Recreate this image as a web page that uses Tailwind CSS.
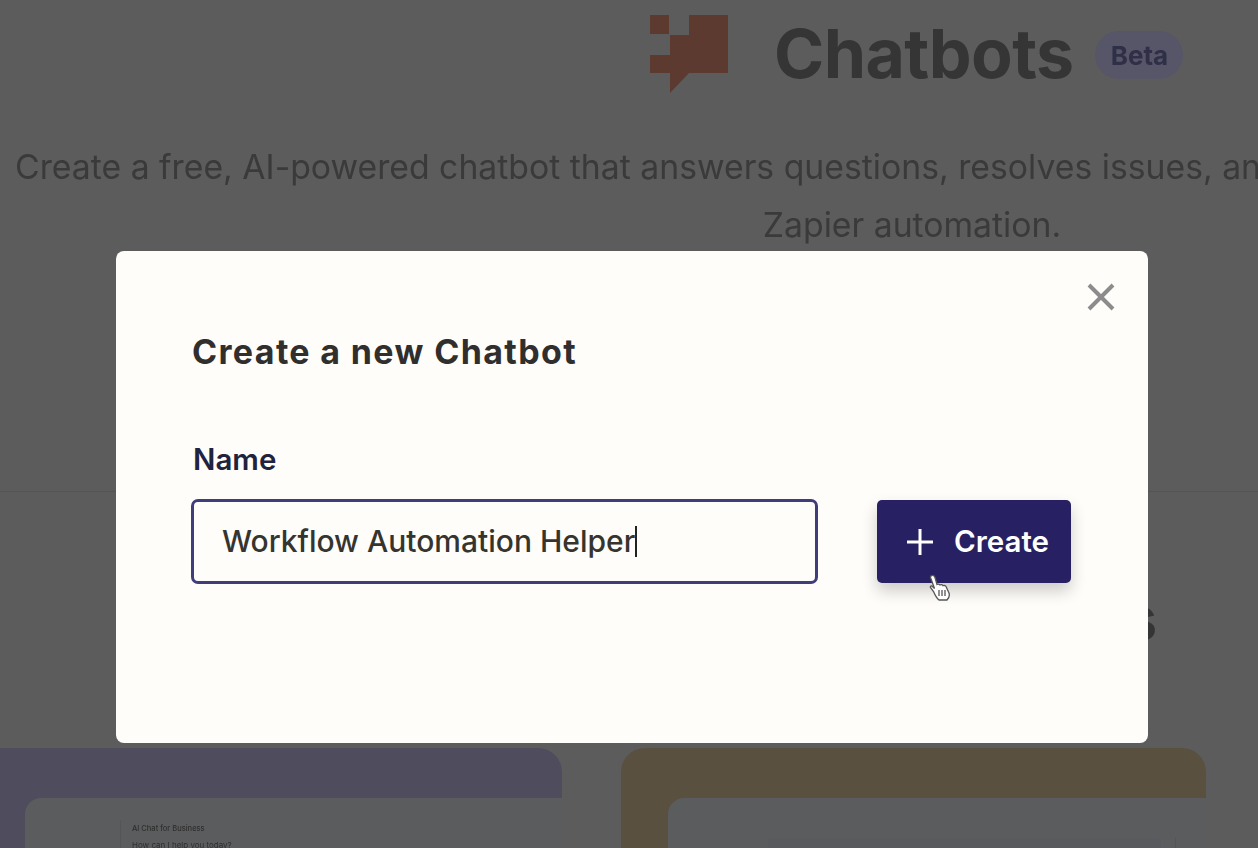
<!DOCTYPE html>
<html lang="en">
<head>
    <meta charset="UTF-8">
    <meta name="viewport" content="width=device-width, initial-scale=1.0">
    <title>Chatbots</title>
    <script src="https://cdn.jsdelivr.net/npm/@tailwindcss/browser@4"></script>
</head>
<body class="bg-[#5c5c5c] font-['Inter',sans-serif]">
    <div class="relative w-[1258px] h-[848px] overflow-hidden">

        <!-- dimmed page behind the modal -->
        <div class="w-[1824px] pt-[15px] blur-[0.5px]">
            <div class="flex items-start pl-[650px]">
                <svg class="w-[78px] h-[78px]" viewBox="0 0 78 78" fill="#5d3a30">
                    <path d="M0 0H19V19H0Z"/>
                    <path d="M39 0H78V58H39L20 78V58H0V40H20V20H39Z"/>
                </svg>
                <h1 class="ml-[46px] text-[68px] leading-[76px] font-bold tracking-[-0.6px] text-[#353535]">Chatbots</h1>
                <span class="ml-[22px] mt-[16px] w-[88px] h-[48px] rounded-[24px] bg-[#575669] flex items-center justify-center text-[26px] font-bold text-[#2f2f47]">Beta</span>
            </div>
            <p class="mt-[50px] pl-[15px] whitespace-nowrap text-[33.75px] leading-[48px] text-[#3a3a3a]">Create a free, AI-powered chatbot that answers questions, resolves issues, and more</p>
            <p class="mt-[10px] text-center text-[33.75px] leading-[48px] text-[#3a3a3a]">Zapier automation.</p>
            <div class="mt-[242px] h-px w-[1258px] bg-[#545454]"></div>
            <h2 class="w-[1157px] mt-[92px] text-right text-[60px] leading-[68px] font-bold text-[#353535]">Templates</h2>
            <div class="mt-[96px] ml-[-23px] flex gap-[59px]">
                <div class="w-[585px] h-[200px] rounded-t-[24px] bg-[#4f4d5d] pl-[48px] pt-[50px]">
                    <div class="h-full rounded-tl-[16px] bg-[#5b5c5e] pl-[95px] pt-[22px]">
                        <div class="h-full border-l border-[#545557] pl-[11px] text-[#2f2f2f]">
                            <p class="text-[7.5px] font-medium leading-[12px] pt-[3px]">AI Chat for Business</p>
                            <p class="text-[8px] leading-[12px] pt-[4px]">How can I help you today?</p>
                        </div>
                    </div>
                </div>
                <div class="w-[585px] h-[200px] rounded-t-[24px] bg-[#5a5040] pl-[47px] pt-[50px]">
                    <div class="h-full flex items-start rounded-tl-[16px] bg-[#5b5c5e] pl-[100px] pt-[40px]">
                        <div class="w-[393px] h-[40px] rounded-[4px] bg-[#585a5e]"></div>
                        <div class="ml-[14px] h-[40px] border-l border-[#545557]"></div>
                    </div>
                </div>
            </div>
        </div>

        <!-- modal -->
        <div class="absolute left-[116px] top-[251px] w-[1032px] h-[492px] rounded-[8px] bg-[#fffdfa] pl-[76px] pt-[77px]">
            <button class="absolute right-[32px] top-[31px] text-[#8c8c8c]">
                <svg class="w-[30px] h-[30px]" viewBox="0 0 30 30" fill="none" stroke="currentColor" stroke-width="4">
                    <path d="M3 3L27 27M27 3L3 27"/>
                </svg>
            </button>
            <h3 class="text-[34px] leading-[48px] font-bold tracking-[1.35px] text-[#302f2d]">Create a new Chatbot</h3>
            <label class="block mt-[64px] pl-[1px] text-[29.5px] leading-[38px] font-semibold text-[#1f2340]">Name</label>
            <div class="mt-[21px] ml-[-1px] flex items-center">
                <div class="flex items-center w-[627px] h-[85px] rounded-[7px] border-[3px] border-[#3f3d7a] pl-[28px] text-[30px] font-medium text-[#35342f]">
                    <span>Workflow Automation Helper</span><span class="w-[1.5px] h-[31px] bg-[#222]"></span>
                </div>
                <button class="ml-[59px] flex items-center w-[194px] h-[83px] rounded-[5px] bg-[#272164] pl-[29px] text-[29.5px] font-semibold text-white shadow-[0_8px_16px_rgba(0,0,0,0.2)]">
                    <svg class="w-[28px] h-[28px] mr-[20px]" viewBox="0 0 28 28" fill="none" stroke="currentColor" stroke-width="3">
                        <path d="M14 1V27M1 14H27"/>
                    </svg>
                    Create
                </button>
            </div>
        </div>

        <!-- mouse pointer -->
        <svg class="absolute left-[929px] top-[574px] w-[22px] h-[28px]" viewBox="0 0 22 28">
            <path d="M3 1.5C4.5 1 5.5 2 6 3.5L8 10.5C9 10 10.2 10 11 11C12 10.4 13.4 10.6 14 11.7C15 11.2 16.5 11.5 17 12.5L20 19C20.8 21.5 20 24 18 26H10C8 24.500 6 21 4.500 17.500L1.500 13.500C1 12 2.500 11.500 3.500 12.500L5.500 14.500L1.500 3.500C1.300 2.500 2 1.700 3 1.500Z" fill="#fff" stroke="#555" stroke-width="1.300"/>
            <path d="M10 16V22M13 16V22M16 16V22" stroke="#555" stroke-width="1.300" fill="none"/>
        </svg>
    </div>
</body>
</html>
